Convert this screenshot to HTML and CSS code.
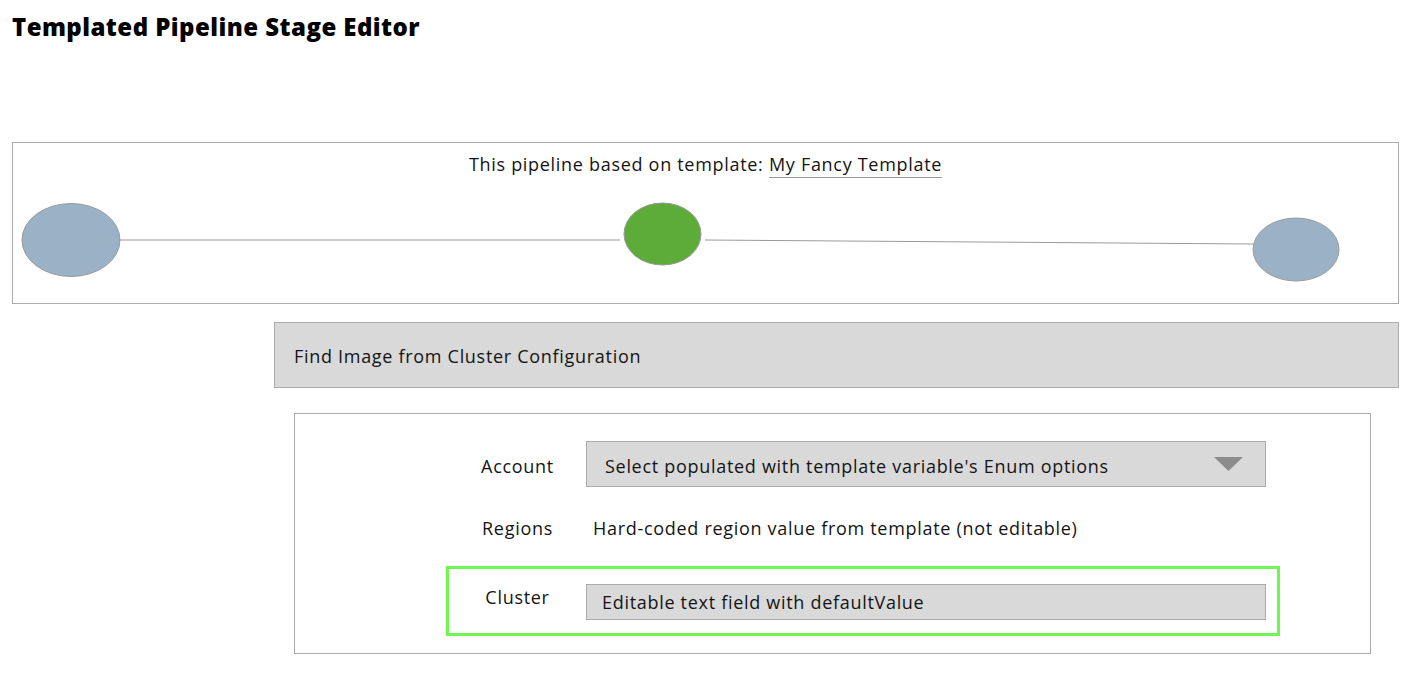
FILE: index.html
```html
<!DOCTYPE html>
<html lang="en">
<head>
<meta charset="utf-8">
<title>Templated Pipeline Stage Editor</title>
<link rel="stylesheet" href="styles.css">
</head>
<body>
<h1 class="title">Templated Pipeline Stage Editor</h1>

<section class="pipeline">
  <p class="pipeline-caption">This pipeline based on template: <span class="template-link">My Fancy Template</span></p>
  <svg class="pipeline-graph" width="1385" height="160" aria-hidden="true">
    <line x1="107" y1="97" x2="607" y2="97" class="edge"/>
    <line x1="692" y1="97" x2="1240" y2="101" class="edge"/>
    <ellipse cx="58" cy="97" rx="49" ry="36.5" class="node node-other"/>
    <ellipse cx="649.5" cy="91" rx="38.5" ry="31" class="node node-current"/>
    <ellipse cx="1283" cy="106.5" rx="43" ry="31.5" class="node node-other"/>
  </svg>
</section>

<div class="stage-bar">Find Image from Cluster Configuration</div>

<div class="stage-form">
  <div class="row">
    <div class="label label-select">Account</div>
    <div class="field select">
      <span>Select populated with template variable's Enum options</span>
      <svg class="caret" width="29" height="14" viewBox="0 0 29 14" aria-hidden="true"><polygon points="0,0 29,0 14.5,14"/></svg>
    </div>
  </div>
  <div class="row">
    <div class="label">Regions</div>
    <div class="field static">Hard-coded region value from template (not editable)</div>
  </div>
  <div class="row row-highlight">
    <div class="label label-raised">Cluster</div>
    <div class="field input">Editable text field with defaultValue</div>
  </div>
</div>
</body>
</html>
```

FILE: styles.css
```css
* { box-sizing: border-box; }

body {
  margin: 0;
  background: #ffffff;
  color: #141414;
  font-family: "Open Sans", Lato, "DejaVu Sans", sans-serif;
  letter-spacing: 0.7px;
}

.title {
  margin: 0;
  padding: 12px 12px 0;
  font-size: 24px;
  font-weight: 800;
  line-height: 30px;
  letter-spacing: 0.45px;
  color: #000;
}

.pipeline {
  position: relative;
  margin: 100px 11px 0 12px;
  height: 162px;
  border: 1px solid #ababab;
}

.pipeline-caption {
  margin: 0;
  padding-top: 9px;
  text-align: center;
  font-size: 18px;
  line-height: 24px;
}

.template-link {
  display: inline-block;
  line-height: 25px;
  border-bottom: 1px solid #9a9a9a;
}

.pipeline-graph {
  position: absolute;
  left: 0;
  top: 0;
}

.edge {
  stroke: #9a9a9a;
  stroke-width: 1;
}

.node {
  stroke: #9a9a9a;
  stroke-width: 1;
}

.node-other { fill: #9bb1c6; }
.node-current { fill: #5dab38; }

.stage-bar {
  display: flex;
  align-items: center;
  margin: 18px 11px 0 274px;
  height: 66px;
  padding: 2px 0 0 19px;
  background: #d9d9d9;
  border: 1px solid #ababab;
  font-size: 18px;
}

.stage-form {
  margin: 25px 39px 0 294px;
  padding: 24px 0 17px 151px;
  border: 1px solid #ababab;
  display: flex;
  flex-direction: column;
  gap: 23px;
}

.row {
  display: flex;
  align-items: center;
  width: 834px;
  padding-right: 11px;
  border: 3px solid transparent;
  font-size: 18px;
}

.label {
  width: 137px;
  flex: none;
  text-align: center;
  line-height: 24px;
}

.label-select { padding-top: 4px; }
.label-raised { padding-bottom: 10px; }

.field {
  width: 680px;
  flex: none;
  line-height: 24px;
}

.select {
  display: flex;
  align-items: center;
  justify-content: space-between;
  height: 46px;
  padding: 4px 22px 0 18px;
  background: #d9d9d9;
  border: 1px solid #ababab;
}

.caret {
  fill: #8c8c8c;
  margin-top: -4px;
}

.static {
  padding-left: 7px;
}

.row-highlight {
  border-color: #6ff64f;
  padding-top: 15px;
  padding-bottom: 13px;
}

.input {
  display: flex;
  align-items: center;
  height: 36px;
  padding-left: 15px;
  background: #d9d9d9;
  border: 1px solid #ababab;
}
```
